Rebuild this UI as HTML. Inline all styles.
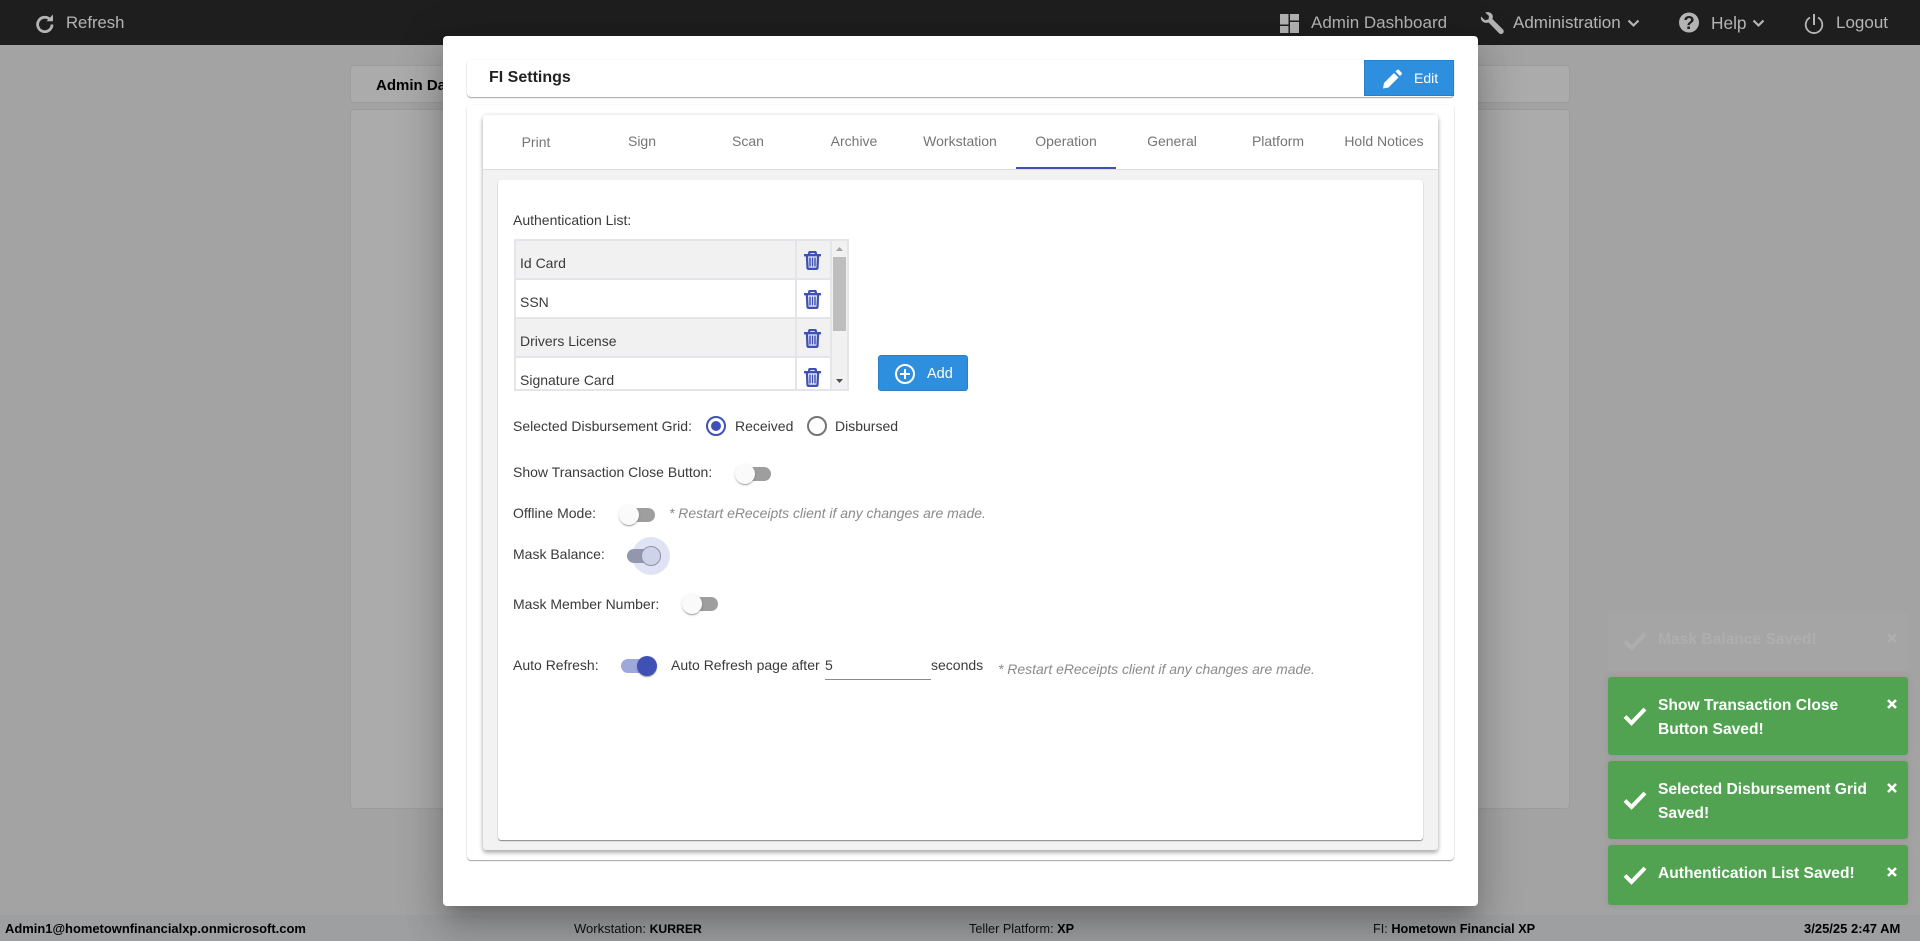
<!DOCTYPE html>
<html><head><meta charset="utf-8"><title>FI Settings</title>
<style>
*{box-sizing:border-box}
html,body{margin:0;padding:0;width:1920px;height:941px;overflow:hidden;background:#a3a3a3;font-family:"Liberation Sans",Arial,sans-serif}
.a{position:absolute}
.t{position:absolute;white-space:nowrap;line-height:20px;font-size:14px;color:#3a3a3a}
.nav{color:#b4b4b4;font-size:17px;line-height:24px}
.tab{position:absolute;top:131px;width:106px;text-align:center;color:#757575;font-size:14px;line-height:20px;white-space:nowrap}
.note{font-style:italic;color:#8a8a8a;font-size:13.95px}
.track{position:absolute;width:34px;height:14px;border-radius:7px;background:#9e9e9e}
.thumb{position:absolute;width:20px;height:20px;border-radius:50%;background:#fafafa;box-shadow:0 2px 1px -1px rgba(0,0,0,.2),0 1px 1px 0 rgba(0,0,0,.14),0 1px 3px 0 rgba(0,0,0,.12)}
.toast{position:absolute;left:1608px;width:300px;background:#51a351;border-radius:3px;box-shadow:0 0 6px rgba(120,120,120,.35)}
.tt{position:absolute;left:1658px;color:#fff;font-weight:bold;font-size:15.6px;line-height:24px;white-space:nowrap}
.foot{position:absolute;top:920px;font-size:12.7px;line-height:18px;color:#111;white-space:nowrap}
.foot b{color:#000}
</style></head><body>

<div class="a" style="left:0;top:0;width:1920px;height:45px;background:#1e1e1e"></div>
<svg class="a" style="left:35px;top:13px" width="20" height="20" viewBox="0 0 20 20" fill="none"><path d="M15 6.5A7.2 7.2 0 1 0 17 11.5" stroke="#b4b4b4" stroke-width="2.8"/><path d="M11.5 8.2h6.500V1.500z" fill="#b4b4b4"/></svg>
<div class="t nav" style="left:66px;top:11px;font-size:16.7px">Refresh</div>

<svg class="a" style="left:1280px;top:14px" width="19" height="19" viewBox="0 0 19 19" fill="#b4b4b4"><rect x="0" y="0" width="8.5" height="10.5"/><rect x="0" y="12" width="8.5" height="7"/><rect x="10" y="0" width="9" height="6.5"/><rect x="10" y="8" width="9" height="11"/></svg>
<div class="t nav" style="left:1311px;top:11px;font-size:17px">Admin Dashboard</div>
<svg class="a" style="left:1480px;top:12px" width="24" height="23" viewBox="0 0 24 23" fill="#b4b4b4"><path d="M1 4.500 5 8.200 8.500 7.400 9 4 5.200.6C8-.6 11.600.4 12.600 3.400c.4 1.300.3 2.500-.2 3.600L23 17.500c1 1.100 1 2.700-.1 3.700-1.100 1.100-2.700 1.100-3.800 0L8.600 10.500c-2.400.8-5.300.3-6.700-1.700C.9 7.500.6 6 1 4.500z"/></svg>
<div class="t nav" style="left:1513px;top:11px">Administration</div>
<svg class="a" style="left:1627px;top:19px" width="13" height="9" viewBox="0 0 13 9" fill="none"><path d="M1.500 1.500 6.500 6.500 11.500 1.500" stroke="#b4b4b4" stroke-width="2.200"/></svg>
<svg class="a" style="left:1679px;top:12px" width="20" height="21" viewBox="0 0 20 21"><circle cx="10" cy="10.500" r="10" fill="#b4b4b4"/><text x="10" y="17" text-anchor="middle" font-family="Liberation Sans" font-weight="bold" font-size="18.500" fill="#1e1e1e">?</text></svg>
<div class="t nav" style="left:1711px;top:11px;font-size:17.3px">Help</div>
<svg class="a" style="left:1752px;top:19px" width="13" height="9" viewBox="0 0 13 9" fill="none"><path d="M1.500 1.500 6.500 6.500 11.500 1.500" stroke="#b4b4b4" stroke-width="2.200"/></svg>
<svg class="a" style="left:1804px;top:13px" width="20" height="21" viewBox="0 0 20 21" fill="none" stroke="#b4b4b4" stroke-width="1.800"><path d="M6 4.500a8.300 8.300 0 1 0 8 0"/><path d="M10 1v11" stroke-width="2"/></svg>
<div class="t nav" style="left:1836px;top:11px">Logout</div>

<div class="a" style="left:350px;top:65px;width:1220px;height:38px;background:#ababab;border:1px solid #9c9c9c;border-radius:4px"></div>
<div class="t" style="left:376px;top:76px;font-weight:bold;font-size:15px;color:#000">Admin Dashboard</div>
<div class="a" style="left:350px;top:109px;width:1220px;height:700px;background:#ababab;border:1px solid #9c9c9c;border-radius:4px"></div>

<div class="a" style="left:0;top:915px;width:1920px;height:26px;background:#9e9fa1"></div>
<div class="foot" style="left:5px;font-weight:bold;font-size:12.95px;color:#000">Admin1@hometownfinancialxp.onmicrosoft.com</div>
<div class="foot" style="left:574px;font-size:13px">Workstation: <b style="font-size:12.2px">KURRER</b></div>
<div class="foot" style="left:969px">Teller Platform: <b>XP</b></div>
<div class="foot" style="left:1373px">FI: <b>Hometown Financial XP</b></div>
<div class="foot" style="left:1804px;font-weight:bold;color:#000;font-size:13px">3/25/25 2:47 AM</div>

<div class="a" style="left:443px;top:36px;width:1035px;height:870px;background:#fff;border-radius:4px;box-shadow:0 11px 15px -7px rgba(0,0,0,.2),0 24px 38px 3px rgba(0,0,0,.14),0 9px 46px 8px rgba(0,0,0,.12)"></div>

<div class="a" style="left:467px;top:60px;width:987px;height:37px;background:#fff;border-radius:4px;box-shadow:0 1px 1px rgba(0,0,0,.35),0 0 2px rgba(0,0,0,.06)"></div>
<div class="t" style="left:489px;top:68px;font-weight:bold;font-size:16px;color:#222">FI Settings</div>
<div class="a" style="left:1364px;top:60px;width:90px;height:36px;background:#2f8fdf;border:1px solid #2a7fc6"></div>
<svg class="a" style="left:1383px;top:69px" width="20" height="20" viewBox="0 0 20 20" fill="#fff"><path d="M0 19.500 1 14 11 4 15.500 8.500 5.500 18.500z"/><path d="M12.500 2.500 14 1c.6-.6 1.500-.6 2 0l2.500 2.500c.6.600.6 1.400 0 2L17 7z"/></svg>
<div class="t" style="left:1414px;top:68px;color:#fff;font-size:14px">Edit</div>

<div class="a" style="left:467px;top:105px;width:987px;height:755px;background:#fff;border-radius:4px;box-shadow:0 1px 1px rgba(0,0,0,.35),0 0 2px rgba(0,0,0,.06)"></div>
<div class="a" style="left:483px;top:115px;width:955px;height:735px;background:#f2f2f2;border-radius:3px;box-shadow:0 3px 4px rgba(0,0,0,.28),0 0 5px rgba(0,0,0,.12)"></div>
<div class="a" style="left:483px;top:115px;width:955px;height:55px;background:#fff;border-bottom:1px solid #dcdcdc;border-radius:3px 3px 0 0"></div>
<div class="tab" style="left:483px;top:132px">Print</div>
<div class="tab" style="left:589px">Sign</div>
<div class="tab" style="left:695px">Scan</div>
<div class="tab" style="left:801px">Archive</div>
<div class="tab" style="left:907px">Workstation</div>
<div class="tab" style="left:1013px">Operation</div>
<div class="tab" style="left:1119px">General</div>
<div class="tab" style="left:1225px">Platform</div>
<div class="tab" style="left:1331px">Hold Notices</div>
<div class="a" style="left:1016px;top:167px;width:100px;height:2px;background:#3f51b5"></div>
<div class="a" style="left:498px;top:180px;width:925px;height:660px;background:#fff;border-radius:3px;box-shadow:0 1px 1px rgba(0,0,0,.45),0 0 1px rgba(0,0,0,.06)"></div>

<div class="t" style="left:513px;top:210px">Authentication List:</div>

<div class="a" style="left:514px;top:239px;width:335px;height:152px;border:2px solid #e3e5e9;background:#fff;overflow:hidden">
  <div class="a" style="left:0;top:0;width:314px;height:39px;background:#f1f1f1;border-bottom:2px solid #e3e5e9"></div>
  <div class="a" style="left:0;top:39px;width:314px;height:39px;background:#fff;border-bottom:2px solid #e3e5e9"></div>
  <div class="a" style="left:0;top:78px;width:314px;height:39px;background:#f1f1f1;border-bottom:2px solid #e3e5e9"></div>
  <div class="a" style="left:279px;top:0;width:2px;height:150px;background:#e3e5e9"></div>
  <div class="a" style="left:314px;top:0;width:2px;height:150px;background:#e3e5e9"></div>
  <div class="a" style="left:316px;top:0;width:17px;height:150px;background:#f1f1f1"></div>
  <div class="a" style="left:317px;top:16px;width:13px;height:74px;background:#bebebe"></div>
  <svg class="a" style="left:319px;top:5px" width="9" height="6"><path d="M1 5 4.500 1 8 5z" fill="#a3a3a3"/></svg>
  <svg class="a" style="left:319px;top:137px" width="9" height="6"><path d="M1 1 4.500 5 8 1z" fill="#505050"/></svg>
</div>
<div class="t" style="left:520px;top:253px">Id Card</div>
<div class="t" style="left:520px;top:292px">SSN</div>
<div class="t" style="left:520px;top:331px">Drivers License</div>
<div class="t" style="left:520px;top:370px">Signature Card</div>
<svg class="a" style="left:804px;top:251px" width="17" height="19" viewBox="0 0 17 19" fill="none" stroke="#3f51b5" stroke-width="2.300"><path d="M0 4.200h17M5.200 4V2c0-.6.4-1 1-1h4.600c.6 0 1 .4 1 1v2M2.900 4l.6 12.600c0 .8.500 1.200 1.200 1.200h7.600c.7 0 1.200-.4 1.200-1.200L14.100 4"/><path d="M6 6.500v9M8.500 6.500v9M11 6.500v9" stroke-width="1.500"/></svg>
<svg class="a" style="left:804px;top:290px" width="17" height="19" viewBox="0 0 17 19" fill="none" stroke="#3f51b5" stroke-width="2.300"><path d="M0 4.200h17M5.200 4V2c0-.6.4-1 1-1h4.600c.6 0 1 .4 1 1v2M2.900 4l.6 12.600c0 .8.500 1.200 1.200 1.200h7.600c.7 0 1.200-.4 1.200-1.200L14.100 4"/><path d="M6 6.500v9M8.500 6.500v9M11 6.500v9" stroke-width="1.500"/></svg>
<svg class="a" style="left:804px;top:329px" width="17" height="19" viewBox="0 0 17 19" fill="none" stroke="#3f51b5" stroke-width="2.300"><path d="M0 4.200h17M5.200 4V2c0-.6.4-1 1-1h4.600c.6 0 1 .4 1 1v2M2.900 4l.6 12.600c0 .8.500 1.200 1.200 1.200h7.600c.7 0 1.200-.4 1.200-1.200L14.100 4"/><path d="M6 6.500v9M8.500 6.500v9M11 6.500v9" stroke-width="1.500"/></svg>
<svg class="a" style="left:804px;top:368px" width="17" height="19" viewBox="0 0 17 19" fill="none" stroke="#3f51b5" stroke-width="2.300"><path d="M0 4.200h17M5.200 4V2c0-.6.4-1 1-1h4.600c.6 0 1 .4 1 1v2M2.900 4l.6 12.600c0 .8.500 1.200 1.200 1.200h7.600c.7 0 1.200-.4 1.200-1.200L14.100 4"/><path d="M6 6.500v9M8.500 6.500v9M11 6.500v9" stroke-width="1.500"/></svg>

<div class="a" style="left:878px;top:355px;width:90px;height:36px;background:#2f8fdf;border:1px solid #2a7fc6;border-radius:3px"></div>
<svg class="a" style="left:895px;top:364px" width="20" height="20" viewBox="0 0 20 20" fill="none" stroke="#fff" stroke-width="2"><circle cx="10" cy="10" r="9"/><path d="M10 5v10M5 10h10"/></svg>
<div class="t" style="left:927px;top:364px;color:#fff;font-size:14.5px">Add</div>

<div class="t" style="left:513px;top:416px">Selected Disbursement Grid:</div>
<div class="a" style="left:706px;top:416px;width:20px;height:20px;border:2px solid #3f51b5;border-radius:50%"></div>
<div class="a" style="left:711px;top:421px;width:10px;height:10px;background:#3f51b5;border-radius:50%"></div>
<div class="t" style="left:735px;top:416px">Received</div>
<div class="a" style="left:807px;top:416px;width:20px;height:20px;border:2px solid #757575;border-radius:50%"></div>
<div class="t" style="left:835px;top:416px">Disbursed</div>

<div class="t" style="left:513px;top:462px">Show Transaction Close Button:</div>
<div class="track" style="left:737px;top:467px"></div>
<div class="thumb" style="left:735px;top:464px"></div>

<div class="t" style="left:513px;top:503px">Offline Mode:</div>
<div class="track" style="left:621px;top:508px"></div>
<div class="thumb" style="left:619px;top:505px"></div>
<div class="t note" style="left:669px;top:503px">* Restart eReceipts client if any changes are made.</div>

<div class="t" style="left:513px;top:544px">Mask Balance:</div>
<div class="a" style="left:632px;top:537px;width:38px;height:38px;border-radius:50%;background:#e0e3f3"></div>
<div class="track" style="left:627px;top:549px;background:#9297ad"></div>
<div class="thumb" style="left:641px;top:546px;background:#ced3ea;border:1px solid #8f93a5;box-shadow:none"></div>

<div class="t" style="left:513px;top:594px">Mask Member Number:</div>
<div class="track" style="left:684px;top:597px"></div>
<div class="thumb" style="left:682px;top:594px"></div>

<div class="t" style="left:513px;top:655px">Auto Refresh:</div>
<div class="track" style="left:621px;top:659px;background:#9fa8da"></div>
<div class="thumb" style="left:637px;top:656px;background:#3f51b5"></div>
<div class="t" style="left:671px;top:655px">Auto Refresh page after</div>
<div class="t" style="left:825px;top:655px">5</div>
<div class="a" style="left:825px;top:679px;width:106px;height:1px;background:#8a8a8a"></div>
<div class="t" style="left:931px;top:655px">seconds</div>
<div class="t note" style="left:998px;top:659px">* Restart eReceipts client if any changes are made.</div>

<div class="toast" style="top:613px;height:58px;background:#a5a5a5;box-shadow:none"></div>
<div class="tt" style="top:628px;color:#aeaeae">Mask Balance Saved!</div>
<div class="toast" style="top:677px;height:78px"></div>
<div class="tt" style="top:694px">Show Transaction Close<br>Button Saved!</div>
<div class="toast" style="top:761px;height:78px"></div>
<div class="tt" style="top:778px">Selected Disbursement Grid<br>Saved!</div>
<div class="toast" style="top:845px;height:60px"></div>
<div class="tt" style="top:862px">Authentication List Saved!</div>

<svg class="a" style="left:1623px;top:631px" width="24" height="20" viewBox="0 0 24 20" fill="none"><path d="M2 10.500 8.500 17 22 3" stroke="#aeaeae" stroke-width="4"/></svg>
<svg class="a" style="left:1623px;top:706px" width="24" height="20" viewBox="0 0 24 20" fill="none"><path d="M2 10.500 8.500 17 22 3" stroke="#fff" stroke-width="4"/></svg>
<svg class="a" style="left:1623px;top:790px" width="24" height="20" viewBox="0 0 24 20" fill="none"><path d="M2 10.500 8.500 17 22 3" stroke="#fff" stroke-width="4"/></svg>
<svg class="a" style="left:1623px;top:865px" width="24" height="20" viewBox="0 0 24 20" fill="none"><path d="M2 10.500 8.500 17 22 3" stroke="#fff" stroke-width="4"/></svg>
<svg class="a" style="left:1887px;top:633px" width="10" height="10" viewBox="0 0 10 10"><path d="M1 1 9 9M9 1 1 9" stroke="#aeaeae" stroke-width="2.600"/></svg>
<svg class="a" style="left:1887px;top:699px" width="10" height="10" viewBox="0 0 10 10"><path d="M1 1 9 9M9 1 1 9" stroke="#fff" stroke-width="2.600"/></svg>
<svg class="a" style="left:1887px;top:783px" width="10" height="10" viewBox="0 0 10 10"><path d="M1 1 9 9M9 1 1 9" stroke="#fff" stroke-width="2.600"/></svg>
<svg class="a" style="left:1887px;top:867px" width="10" height="10" viewBox="0 0 10 10"><path d="M1 1 9 9M9 1 1 9" stroke="#fff" stroke-width="2.600"/></svg>
</body></html>
